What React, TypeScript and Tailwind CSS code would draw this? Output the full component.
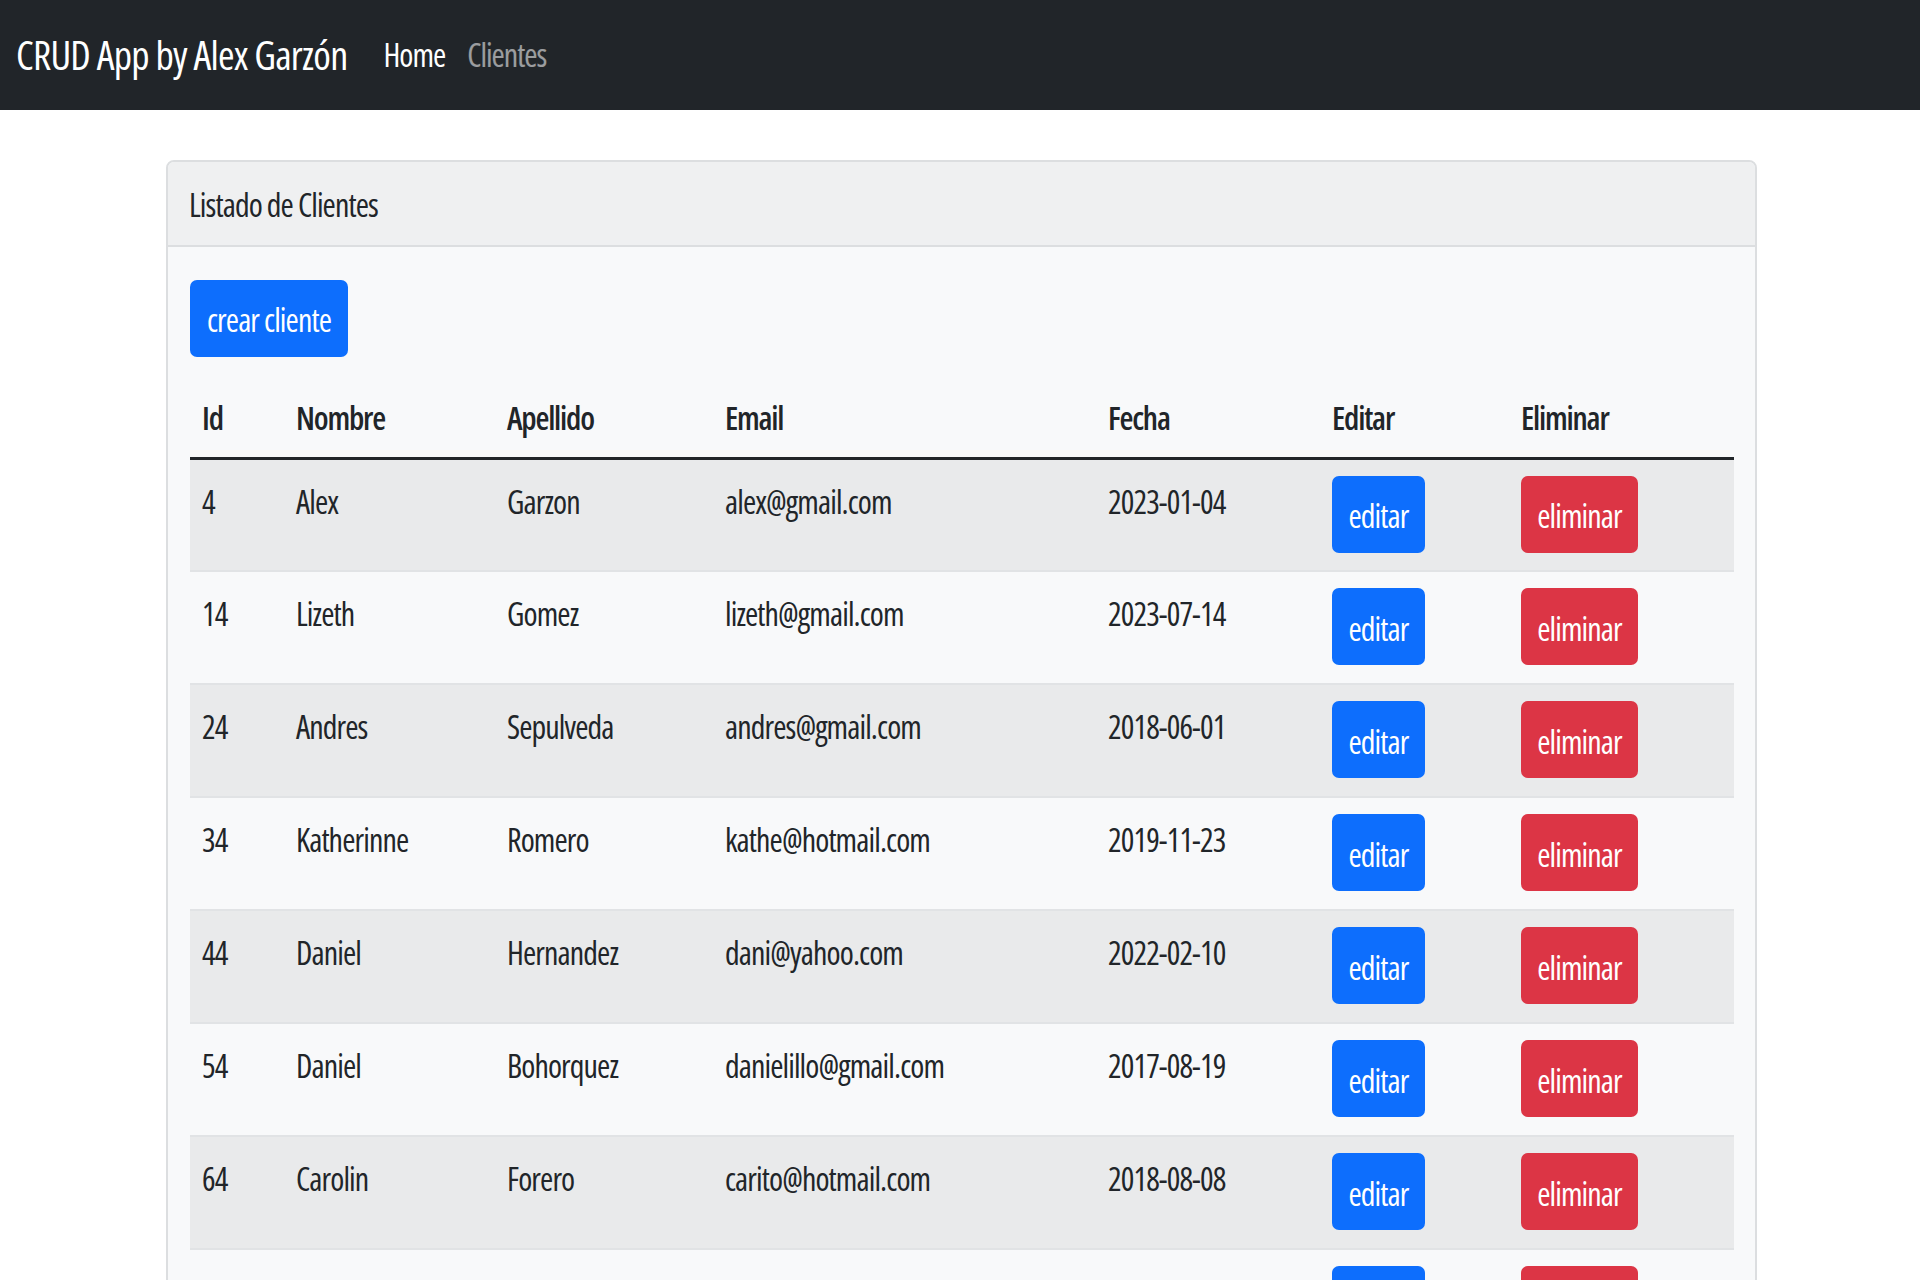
import React from 'react';

const clientes = [
  { id: 4, nombre: 'Alex', apellido: 'Garzon', email: 'alex@gmail.com', fecha: '2023-01-04' },
  { id: 14, nombre: 'Lizeth', apellido: 'Gomez', email: 'lizeth@gmail.com', fecha: '2023-07-14' },
  { id: 24, nombre: 'Andres', apellido: 'Sepulveda', email: 'andres@gmail.com', fecha: '2018-06-01' },
  { id: 34, nombre: 'Katherinne', apellido: 'Romero', email: 'kathe@hotmail.com', fecha: '2019-11-23' },
  { id: 44, nombre: 'Daniel', apellido: 'Hernandez', email: 'dani@yahoo.com', fecha: '2022-02-10' },
  { id: 54, nombre: 'Daniel', apellido: 'Bohorquez', email: 'danielillo@gmail.com', fecha: '2017-08-19' },
  { id: 64, nombre: 'Carolin', apellido: 'Forero', email: 'carito@hotmail.com', fecha: '2018-08-08' },
  { id: 74, nombre: '', apellido: '', email: '', fecha: '' },
];

// Navbar
const Navbar: React.FC = () => (
  <nav className="h-[110px] bg-[#212529] flex items-center px-4 gap-[36px]">
    <span className="text-[40px] text-white leading-none whitespace-nowrap tracking-[-0.75px]">CRUD App by Alex Garzón</span>
    <div className="flex items-center gap-[22px] text-[32px] leading-none tracking-[-1px]">
      <a className="text-white">Home</a>
      <a className="text-white/55">Clientes</a>
    </div>
  </nav>
);

// Tabla de clientes
const ClientesTable: React.FC = () => (
  <table className="w-full table-fixed border-collapse text-[32px] text-[#212529] tracking-[-0.9px]">
    <colgroup>
      <col className="w-[94px]" />
      <col className="w-[211px]" />
      <col className="w-[218px]" />
      <col className="w-[383px]" />
      <col className="w-[224px]" />
      <col className="w-[189px]" />
      <col className="w-[225px]" />
    </colgroup>
    <thead>
      <tr className="h-[79px] border-b-[3px] border-[#212529]">
        {['Id', 'Nombre', 'Apellido', 'Email', 'Fecha', 'Editar', 'Eliminar'].map((h) => (
          <th key={h} className="px-3 pt-[1px] text-left font-semibold tracking-[-1.2px] align-middle">{h}</th>
        ))}
      </tr>
    </thead>
    <tbody>
      {clientes.map((c, i) => (
        <tr
          key={c.id}
          className={`h-[113px] border-b-2 border-[#e1e3e5] ${i % 2 === 0 ? 'bg-[#e9eaeb]' : 'bg-[#f8f9fa]'}`}
        >
          <td className="px-3 pt-[18px] align-top leading-[48px]">{c.nombre ? c.id : ''}</td>
          <td className="px-3 pt-[18px] align-top leading-[48px]">{c.nombre}</td>
          <td className="px-3 pt-[18px] align-top leading-[48px]">{c.apellido}</td>
          <td className="px-3 pt-[18px] align-top leading-[48px]">{c.email}</td>
          <td className="px-3 pt-[18px] align-top leading-[48px]">{c.fecha}</td>
          <td className="px-3 pt-[16px] align-top">
            <button className="h-[77px] w-[93px] rounded-[7px] bg-[#0d6efd] text-white leading-none pt-[4px] whitespace-nowrap">editar</button>
          </td>
          <td className="px-3 pt-[16px] align-top">
            <button className="h-[77px] w-[117px] rounded-[7px] bg-[#dc3545] text-white leading-none pt-[4px] whitespace-nowrap">eliminar</button>
          </td>
        </tr>
      ))}
    </tbody>
  </table>
);

export default function App() {
  return (
    <div className="min-h-screen bg-white font-['Open_Sans',sans-serif] font-stretch-[75%]">
      <Navbar />
      <main className="pt-[50px] pl-[166px] pr-[163px]">
        <div className="rounded-[8px] border-2 border-[#dcdee0] bg-[#f8f9fa] overflow-hidden">
          <div className="h-[85px] flex items-center pt-[2px] px-[21px] bg-[#eff0f1] border-b-2 border-[#dcdee0] text-[32px] text-[#212529] tracking-[-0.9px]">
            Listado de Clientes
          </div>
          <div className="px-[22px] pt-[33px]">
            <button className="h-[77px] w-[158px] rounded-[7px] bg-[#0d6efd] text-white text-[32px] leading-none mb-[22px] pt-[3px] whitespace-nowrap tracking-[-0.9px]">
              crear cliente
            </button>
            <ClientesTable />
          </div>
        </div>
      </main>
    </div>
  );
}
